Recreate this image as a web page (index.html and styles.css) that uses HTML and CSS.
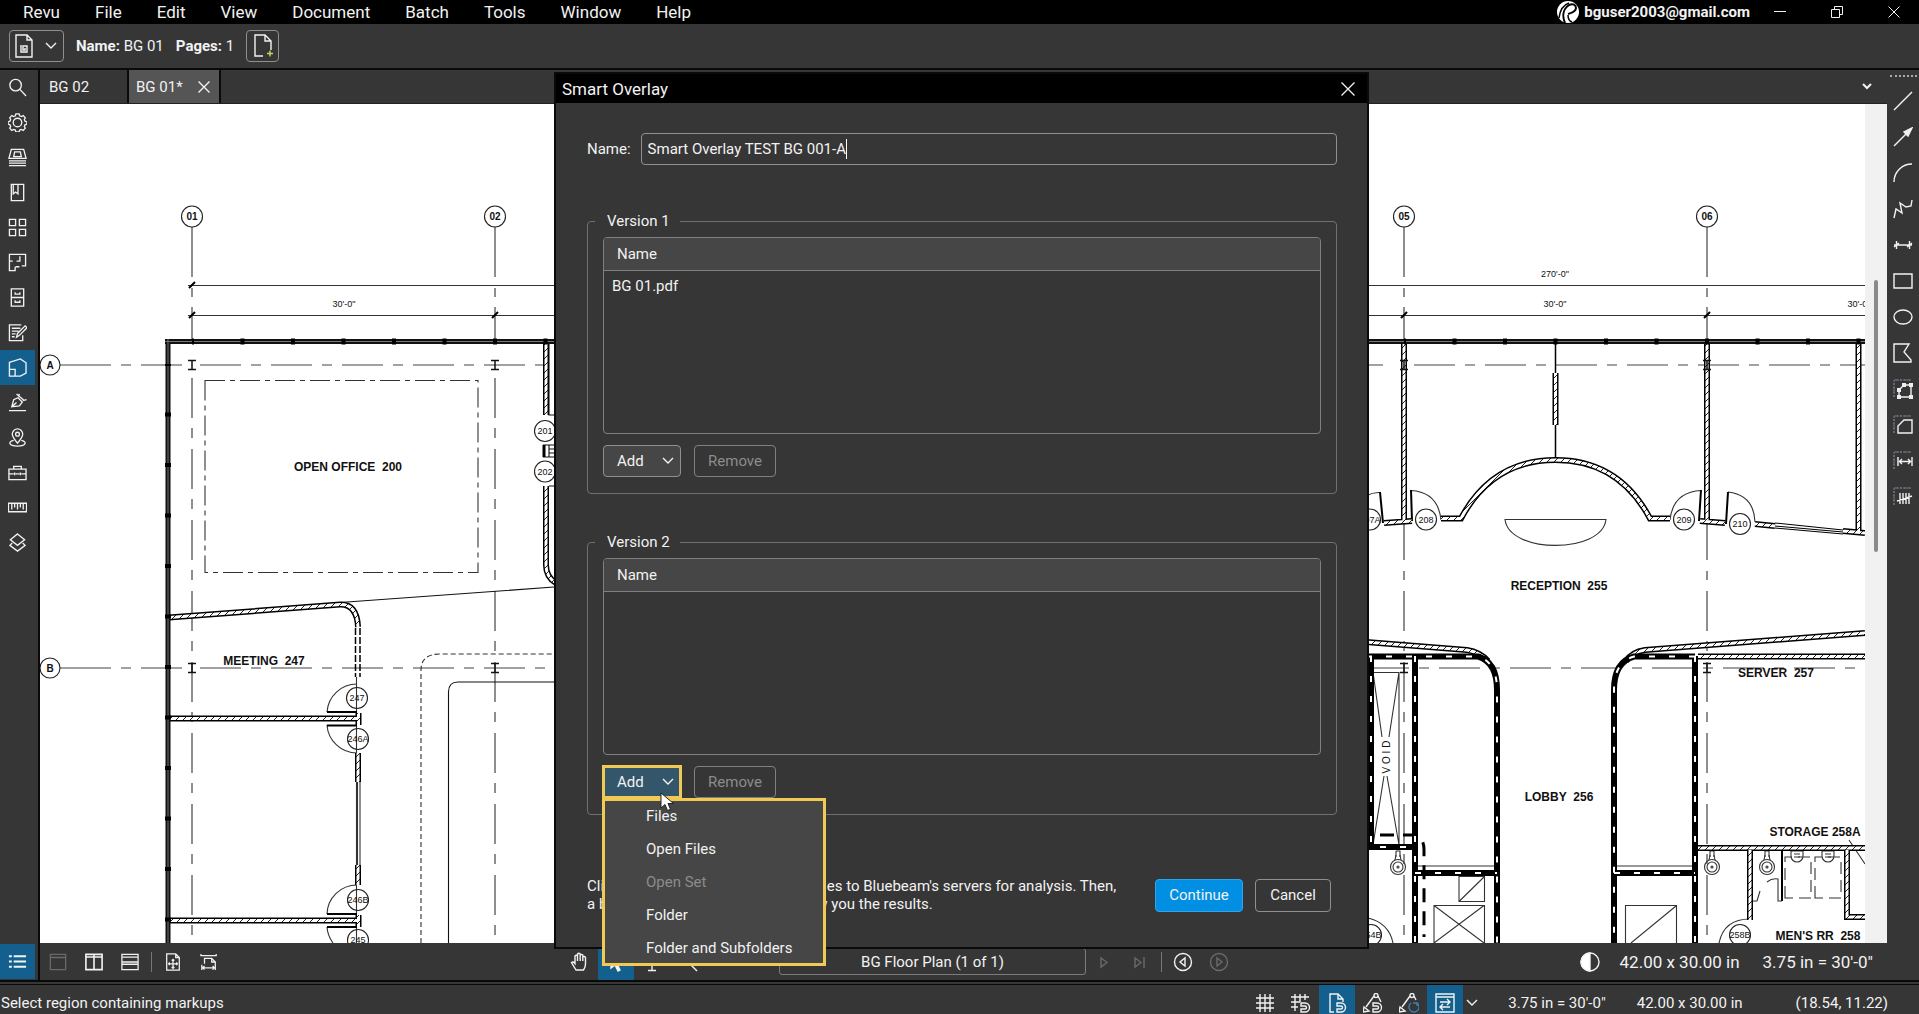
FILE: index.html
```html
<!DOCTYPE html>
<html lang="en">
<head>
<meta charset="utf-8">
<title>Revu - BG 01</title>
<link rel="stylesheet" href="styles.css">
</head>
<body>
<div class="app">
  <header class="menubar">
    <nav class="menus" aria-label="Main menu">
      <button>Revu</button><button>File</button><button>Edit</button><button>View</button><button>Document</button><button>Batch</button><button>Tools</button><button>Window</button><button>Help</button>
    </nav>
    <div class="account">
      <svg class="logo" viewBox="0 0 22 22"><circle cx="11" cy="11" r="11" fill="#fff"/><path d="M8 22C5 15 6 8 12 4c4-2 7 0 7 3 0 4-5 5-8 6" fill="none" stroke="#000" stroke-width="2"/><path d="M2 17C3 9 6 4 12 2" fill="none" stroke="#000" stroke-width="1.5"/><path d="M11 14c0 4 1 6 4 7" fill="none" stroke="#000" stroke-width="1.5"/></svg>
      <span>bguser2003@gmail.com</span>
    </div>
    <div class="window-controls">
      <button aria-label="Minimize"><svg viewBox="0 0 12 12"><path d="M0 5.5h12"/></svg></button>
      <button aria-label="Restore"><svg viewBox="0 0 12 12"><path d="M.5 3.500h8v8h-8zM3.500 3V.5h8v8H9"/></svg></button>
      <button aria-label="Close"><svg viewBox="0 0 12 12"><path d="M.5.5l11 11M11.500.5l-11 11"/></svg></button>
    </div>
  </header>

  <div class="toolbar">
    <button class="tool-btn doc-btn" aria-label="Document">
      <svg class="icon" viewBox="0 0 20 24"><path d="M2 1h11l5 5v17H2zM13 1v5h5M7 11v7h6v-6H9v4h2v-2"/></svg>
      <svg class="chev" viewBox="0 0 12 8"><path d="M1 1l5 5 5-5"/></svg>
    </button>
    <p><b>Name:</b> BG 01</p>
    <p><b>Pages:</b> 1</p>
    <button class="tool-btn" aria-label="Add page"><svg class="icon" viewBox="0 0 20 24"><path d="M10 22H2V1h10l6 6v9M12 1v6h6"/><path d="M17 16.500v6M14 19.500h6" stroke="#c8d85a"/></svg></button>
  </div>

  <main class="workspace">
    <aside class="panels">
      <button aria-label="Search"><svg class="icon" viewBox="0 0 20 20"><circle cx="8" cy="7.500" r="6"/><path d="M12.500 12l6.500 7"/></svg></button>
      <button aria-label="Settings"><svg class="icon" viewBox="0 0 20 20"><circle cx="10" cy="10" r="4.500"/><path d="M8.300 1h3.400l.6 2 1.700.7 2-1 2.200 2.300-1 1.900.7 1.700 2 .7v2.400l-2 .7-.7 1.700 1 1.900-2.200 2.300-2-1-1.700.7-.6 2H8.300l-.6-2-1.700-.7-2 1L1.800 16l1-1.900-.7-1.700-2-.7V9.300l2-.7.7-1.700-1-1.900L4 2.700l2 1L7.700 3z"/></svg></button>
      <button aria-label="File access"><svg class="icon" viewBox="0 0 20 20"><path d="M3.500 1.500h13l2.500 9.500H1zM7 4h6l1 5H6zM1 13.500h18M1 16h18M1 18.500h18"/></svg></button>
      <button aria-label="Bookmarks"><svg class="icon" viewBox="0 0 20 20"><path d="M3.500 1.500h13v17h-13zM5.500 1.500v10l2.500-2 2.500 2v-10"/></svg></button>
      <button aria-label="Thumbnails"><svg class="icon" viewBox="0 0 20 20"><path d="M1.500 1.500h6.500v6.500H1.500zM12 1.500h6.500v6.500H12zM1.500 12h6.500v6.500H1.500zM12 12h6.500v6.500H12z"/></svg></button>
      <button aria-label="Spaces"><svg class="icon" viewBox="0 0 20 20"><path d="M5 8.500H1.500v-7h17v12h-4M1.500 8.500v10h6v-4M9 8.500h3.500v-5M8 14.500h4"/></svg></button>
      <button aria-label="Sets"><svg class="icon" viewBox="0 0 20 20"><path d="M3.500 1h13v18h-13zM3.500 10h13M7.500 4.500v2h5v-2M7.500 13v2h5v-2"/></svg></button>
      <button aria-label="Forms"><svg class="icon" viewBox="0 0 20 20"><path d="M14 2H1.500v16.500h14V13M4 5.500h9M4 8.500h7M4 11.500h4M4 14.500h3M9 15l1-4 8-8 2 2-8 8z"/></svg></button>
      <button class="active" aria-label="Smart overlay"><svg class="icon" viewBox="0 0 20 20"><path d="M1.500 4.500L13 1l6 4v11l-6 3H1.500zM1.500 12h6v7"/></svg></button>
      <button aria-label="Signatures"><svg class="icon" viewBox="0 0 20 20"><path d="M1 18.500h18M4 14.500l2-7.500 4.500-2L15 9.500l-3 4zM4 14.500l5-4.500M9 1l8 7M11 4l1-3M15.500 8l4-1"/></svg></button>
      <button aria-label="Places"><svg class="icon" viewBox="0 0 20 20"><path d="M10 16C6 11 4.500 9 4.500 6.500a5.500 5.500 0 0 1 11 0C15.500 9 14 11 10 16z"/><circle cx="10" cy="6.500" r="2"/><path d="M6 13C0 14 0 19 10 19s10-5 4-6"/></svg></button>
      <button aria-label="Tool chest"><svg class="icon" viewBox="0 0 20 20"><path d="M1 6.500h18V17.500H1zM6 6.500v-3h8v3M1 11.500h5M8 11.500h4M14 11.500h5M7 10v3M13 10v3"/></svg></button>
      <button aria-label="Measurements"><svg class="icon" viewBox="0 0 20 20"><path d="M.5 5.500h19v9H.5zM4 6v6M7 6v4M10 6v6M13 6v4M16 6v6"/></svg></button>
      <button aria-label="Layers"><svg class="icon" viewBox="0 0 20 20"><path d="M10 1l7.500 6L10 13 2.500 7zM4.500 10.500L2 13l8 6 8-6-2.500-2.500"/></svg></button>
      <button class="active markups" aria-label="Markups list"><svg class="icon" viewBox="0 0 20 20"><path d="M6 4.500h13M6 10h13M6 15.500h13M1 4.500h3M1 10h3M1 15.500h3" stroke-width="2"/></svg></button>
    </aside>

    <section class="document">
      <div class="tabs">
        <button class="tab">BG 02</button>
        <div class="tab current"><button>BG 01*</button><button class="tab-close" aria-label="Close tab"><svg viewBox="0 0 12 12"><path d="M.5.5l11 11M11.500.5l-11 11"/></svg></button></div>
        <button class="tab-list" aria-label="All tabs"><svg class="chev" viewBox="0 0 12 8"><path d="M2 1l4 4 4-4" stroke-width="2"/></svg></button>
      </div>
      <div class="sheet">
        <svg class="plan" viewBox="40 104 1825 839" preserveAspectRatio="xMinYMin slice" role="img" aria-label="Floor plan">
          <defs>
            <pattern id="hatch" width="7" height="7" patternUnits="userSpaceOnUse"><rect width="7" height="7" fill="#fff"/><path d="M-1 8L8-1" stroke="#222" stroke-width="1"/></pattern>
            <path id="walls" d="M169 617.500L340 604.500Q357 604 358 627M169 718.500H359M358.500 713V725M358 753V782M358 865V885M169 920.500H359M358.500 915V927M546 343V415M546 486V565Q546 577 556 583M1404 343V520M1707 343V520M1858.500 343V533M1384 523L1412 521M1441 518.500H1461Q1492 460 1555.500 460T1650 518.500H1670M1700 521L1725 523M1755 524L1775 526M1843 531L1865 533M1555.500 373V425M1366 642L1467 650Q1480 652 1488 661M1865 633L1645 650Q1632 652 1626 661M1698 656.500H1865M1698 848H1865M1750 850V920M1847 850V917H1865"/>
            <path id="cores" d="M1366 656.500H1478Q1497 662 1497 690V943M1695 656.500H1634Q1614 662 1614 690V943M1371 656V847H1415M1415 656V943M1695 656V943M1415 873H1497M1614 873H1695"/>
            <path id="facade" d="M165 341.500H556M1366 341.500H1865M168 339V943"/>
            <path id="column" d="M-4-4.500H4M-4 4.500H4M0-4.500V4.500" stroke="#111" stroke-width="1.500"/>
            <g id="toilet"><path d="M-2-16h4v6M-2-16v6" /><circle r="7.500"/><circle r="5"/><circle r="1"/><path d="M-3-7L-2-12M3-7L2-12"/></g>
          </defs>
          <g class="grid">
            <path d="M192 307V340M192 378V935M495 307V340M495 378V935M1404 307V340M1404 520V560M1404 571V580M1707 307V340M1707 520V560M1707 571V580M1404 591V935M1707 591V935" stroke-dasharray="40 10 10 11"/>
            <path d="M192 227V277M192 288V297M495 227V277M495 288V297M1404 227V277M1404 288V297M1707 227V277M1707 288V297"/>
            <path d="M60 365H111M60 668H111"/>
            <path d="M121 365H131M141 365H182M121 668H131M141 668H182M200 365H554M200 668H554M1414 365H1865M1368 365H1383M1368 668H1865" stroke-dasharray="41 10 10 10"/>
          </g>
          <g class="thin">
            <path d="M188 285.500H554M188 315.500H554M1368 285.500H1865M1368 315.500H1865"/>
            <path d="M189 288l6-6M189 318l6-6M492 318l6-6M1401 318l6-6M1704 318l6-6" stroke="#000" stroke-width="2"/>
            <path d="M205 380.500H478V572.500H205Z" stroke-dasharray="20 5 5 5"/>
            <path d="M340 602.500L554 587M448.500 943V692Q448.500 682 458 682H554" stroke="#111"/>
            <path d="M421 943V670Q421 654 440 654H554" stroke-dasharray="5 3"/>
            <path d="M355.500 628V677M360 628V677" stroke="#000" stroke-width="1.500" stroke-dasharray="7 2"/>
            <path d="M356.500 677V943M360 782V865M357.500 782V865" />
            <path d="M327 712A30 30 0 0 1 357 684M327 725A30 30 0 0 0 357 753M327 914A30 30 0 0 1 357 885M327 927A30 30 0 0 0 333 943"/>
            <path d="M327 712H357M327 725.500H357M327 914H357M327 927H357" stroke="#000" stroke-width="2"/>
            <path d="M549 343V415H555M549 486H555M543 445H554M543 457H554M549 445V457M549 449H554M549 453H554" stroke="#111"/>
            <path d="M544 445V457" stroke="#000" stroke-width="3"/>
            <path d="M1555.500 343V373M1555.500 425V457" stroke="#000" stroke-width="1.500"/>
            <path d="M1505 519.500H1606C1602 554 1509 554 1505 519.500Z"/>
            <path d="M1411 490.500Q1438 492 1441 520M1701 490.500Q1673 492 1670 520M1728 492Q1754 495 1755 522M1380 492.500Q1373 492 1366 496"/>
            <path d="M1411 490L1412 521M1701 490L1699 521M1728 492L1726 524M1380 492L1383 523" stroke="#000" stroke-width="2"/>
            <path d="M1775 523L1843 530M1775 526L1843 532M1775 528L1843 534" stroke="#000"/>
            <path d="M1373 672.500H1399V845M1399 672L1389 737M1373 672L1382 737M1384 776L1373 845M1387 776L1399 845M1415 866H1497M1614 866H1695"/>
            <path d="M1459 876.500H1484.500V901.500H1459ZM1459 901.500L1484.500 876.500M1434 943V905.500H1484.500V943M1434 905.500L1484 943M1484 905.500L1434 943M1625.500 943V905.500H1676.500V943M1631 943L1676 906"/>
            <path d="M1380 835H1413Q1424 836 1424 850V937" stroke="#000" stroke-width="3" stroke-dasharray="14 9"/>
            <path d="M1782 850V901" stroke="#000" stroke-width="2"/>
            <path d="M1782 901H1778V879Q1772 878 1767 882M1760 891L1757 901H1753"/>
            <path d="M1785 898V857H1811V898ZM1815 898V857H1841V898Z" stroke-dasharray="12 6"/>
            <path d="M1791 851V856A6 6 0 0 0 1803 856V851ZM1822 851V856A6 6 0 0 0 1834 856V851ZM1794 854h6M1794 857h6M1825 854h6M1825 857h6M1849 840L1865 864M1719 943Q1724 919 1750 919M1368 918Q1389 923 1393 943"/>
            <use href="#toilet" x="1398" y="867"/><use href="#toilet" x="1712" y="867"/><use href="#toilet" x="1767" y="867"/>
          </g>
          <use href="#walls" class="wall-edge"/><use href="#walls" class="wall-fill"/>
          <use href="#cores" class="core"/><use href="#cores" class="core-mark"/>
          <use href="#facade" class="facade"/><use href="#facade" class="facade-line"/>
          <path d="M192 341.500H556M1404 341.500H1865" class="mullion"/>
          <path d="M168 364V943" class="mullion"/>
          <use href="#column" x="192" y="365"/><use href="#column" x="495" y="365"/><use href="#column" x="192" y="668"/><use href="#column" x="495" y="668"/><use href="#column" x="1404" y="365"/><use href="#column" x="1707" y="365"/><use href="#column" x="1404" y="668"/><use href="#column" x="1707" y="668"/>
          <g class="bubble">
            <circle cx="192" cy="216.500" r="10.500"/><circle cx="495" cy="216.500" r="10.500"/><circle cx="1404" cy="216.500" r="10.500"/><circle cx="1707" cy="216.500" r="10.500"/><circle cx="50" cy="365" r="10"/><circle cx="50" cy="668" r="10"/>
          </g>
          <g class="bubble clear">
            <circle cx="545" cy="431" r="10.500"/><circle cx="545" cy="471.500" r="10.500"/><circle cx="357" cy="698" r="10.500"/><circle cx="358" cy="739" r="10.500"/><circle cx="358" cy="900" r="10.500"/><circle cx="358" cy="940" r="10.500"/><circle cx="1370" cy="519.500" r="10.500"/><circle cx="1426" cy="519.500" r="10.500"/><circle cx="1684" cy="519.500" r="10.500"/><circle cx="1740" cy="524" r="10.500"/><circle cx="1740" cy="935" r="10.500"/><circle cx="1371" cy="935" r="10.500"/>
          </g>
          <g class="tag bold"><text x="192" y="220">01</text><text x="495" y="220">02</text><text x="1404" y="220">05</text><text x="1707" y="220">06</text><text x="50" y="369">A</text><text x="50" y="672">B</text></g>
          <g class="tag"><text x="545" y="434">201</text><text x="545" y="475">202</text><text x="357" y="701">247</text><text x="358" y="742">246A</text><text x="358" y="903">246B</text><text x="358" y="943">245</text><text x="1370" y="523">207A</text><text x="1426" y="523">208</text><text x="1684" y="523">209</text><text x="1740" y="527">210</text><text x="1740" y="938">258B</text><text x="1371" y="938">254B</text>
            <text x="344" y="307">30'-0"</text><text x="1555" y="277">270'-0"</text><text x="1555" y="307">30'-0"</text><text x="1859" y="307">30'-0"</text></g>
          <text class="void" transform="translate(1390 757) rotate(-90)">V O I D</text>
          <g class="room"><text x="348" y="471">OPEN OFFICE&#160; 200</text><text x="264" y="665">MEETING&#160; 247</text><text x="1559" y="590">RECEPTION&#160; 255</text><text x="1559" y="801">LOBBY&#160; 256</text><text x="1776" y="677">SERVER&#160; 257</text><text x="1815" y="836">STORAGE 258A</text><text x="1818" y="940">MEN'S RR&#160; 258</text></g>
        </svg>
        <div class="scrollbar"><div class="thumb"></div></div>
      </div>
      <div class="navbar">
        <div class="nav-left">
          <button class="dim" aria-label="Single view"><svg class="icon" viewBox="0 0 20 20"><path d="M1.500 1.500h17v17h-17zM1.500 5h17"/></svg></button>
          <button aria-label="Split vertically"><svg class="icon" viewBox="0 0 20 20"><path d="M1 1.500h18v17H1zM1 4.500h18M10 2v16" stroke-width="1.800"/></svg></button>
          <button aria-label="Split horizontally"><svg class="icon" viewBox="0 0 20 20"><path d="M1 1.500h18v17H1zM1 4.500h18M1 10h18M1 12.500h18"/></svg></button>
          <i class="rule"></i>
          <button aria-label="Fit page"><svg class="icon" viewBox="0 0 20 20"><path d="M3 1h10l4 4v14H3zM13 1v4h4M10 7v10M5 12h10M8.500 8.500L10 7l1.500 1.500M8.500 15.500L10 17l1.500-1.500M6.500 10.500L5 12l1.500 1.500M13.500 10.500L15 12l-1.500 1.500"/></svg></button>
          <button aria-label="Fit width"><svg class="icon" viewBox="0 0 20 20"><path d="M1 1v2h17V1M5 12V6h8l4 4v4M13 6v4h4M2 13v6M17 14v5M3 16.500h13M5 14.500l-2 2 2 2M14 14.500l2 2-2 2"/></svg></button>
        </div>
        <div class="nav-center">
          <button aria-label="Pan"><svg class="icon" viewBox="0 0 20 20"><path d="M6 18Q3 13 1.500 10.500q1.500-1.500 3.500 1V4q1.300-1.500 2.500 0V2q1.400-1.500 2.700 0v1q1.300-1.200 2.600 0v2q1.700-1 2.700.500V12q0 3-2 6zM7.500 4v5M10.200 3v6M12.800 4v5"/></svg></button>
          <button class="active" aria-label="Select"><svg class="icon" viewBox="0 0 20 20"><path d="M5 1v15l4-3 3 6 2-1-3-6h5z" fill="#fff"/></svg></button>
          <button aria-label="Select text"><svg class="icon" viewBox="0 0 20 20"><path d="M10 2v16M6 18.500h8M6 1.500h8"/></svg></button>
          <button aria-label="Zoom"><svg class="icon" viewBox="0 0 20 20"><circle cx="8" cy="7" r="6"/><path d="M12 12l7 7"/></svg></button>
          <input class="page-field" aria-label="Page" value="BG Floor Plan (1 of 1)">
          <button class="dim" aria-label="Next page"><svg class="icon" viewBox="0 0 20 20"><path d="M7 6l6 4.500L7 15z"/></svg></button>
          <button class="dim" aria-label="Last page"><svg class="icon" viewBox="0 0 20 20"><path d="M5 6l6 4.500L5 15zM14 5v11"/></svg></button>
          <i class="rule"></i>
          <button aria-label="Previous view"><svg class="icon" viewBox="0 0 20 20"><circle cx="10" cy="10" r="8.500"/><path d="M12 6v8l-5-4z"/></svg></button>
          <button class="dim" aria-label="Next view"><svg class="icon" viewBox="0 0 20 20"><circle cx="10" cy="10" r="8.500"/><path d="M8 6v8l5-4z"/></svg></button>
        </div>
        <div class="nav-right">
          <svg class="icon" viewBox="0 0 20 20"><circle cx="10" cy="10" r="9"/><path d="M10 1a9 9 0 0 0 0 18z" fill="#fff"/></svg>
          <span>42.00 x 30.00 in</span><span>3.75 in = 30'-0"</span>
        </div>
      </div>
    </section>

    <aside class="tools">
      <div class="grip"></div>
      <button aria-label="Line"><svg class="icon" viewBox="0 0 20 20"><path d="M1 19L19 1"/></svg></button>
      <button aria-label="Arrow"><svg class="icon" viewBox="0 0 20 20"><path d="M1 19L14 6"/><path d="M19 1l-8 4 4 4z" fill="#eee"/></svg></button>
      <button aria-label="Arc"><svg class="icon" viewBox="0 0 20 20"><path d="M1 19C1 9 9 1 19 1"/></svg></button>
      <button aria-label="Polyline"><svg class="icon" viewBox="0 0 20 20"><path d="M1 19l2-9 6 4-2-10 6 4 5-1 1-6"/></svg></button>
      <button aria-label="Dimension"><svg class="icon" viewBox="0 0 20 20"><path d="M1 10h18M3.500 6v8M16.500 6v8M1 12l5-4M14 12l5-4"/></svg></button>
      <button aria-label="Rectangle"><svg class="icon" viewBox="0 0 20 20"><path d="M1 3h18v14H1z"/></svg></button>
      <button aria-label="Ellipse"><svg class="icon" viewBox="0 0 20 20"><ellipse cx="10" cy="10" rx="9" ry="7"/></svg></button>
      <button aria-label="Polygon"><svg class="icon" viewBox="0 0 20 20"><path d="M1 1h15l-5 8 7 8v2H1z"/></svg></button>
      <button aria-label="Polylength"><svg class="icon" viewBox="0 0 20 20"><path class="ticks" d="M1 1h18M1 1v18M4 0v3M8 0v3M12 0v3M16 0v3M0 5h3M0 9h3M0 13h3M0 17h3"/><path d="M6 18V11l5-5h7v12z"/><path d="M4 9h4v4H4zM9 4h4v4H9zM16 4h4v4h-4zM4 16h4v4H4zM16 16h4v4h-4z" fill="#eee" stroke="none"/></svg></button>
      <button aria-label="Area"><svg class="icon" viewBox="0 0 20 20"><path class="ticks" d="M1 1h18M1 1v18M4 0v3M8 0v3M12 0v3M16 0v3M0 5h3M0 9h3M0 13h3M0 17h3"/><path d="M5 18v-7l6-6h8v13z"/></svg></button>
      <button aria-label="Length"><svg class="icon" viewBox="0 0 20 20"><path class="ticks" d="M1 1h18M1 1v18M4 0v3M8 0v3M12 0v3M16 0v3M0 5h3M0 9h3M0 13h3M0 17h3"/><path d="M5 6v9M19 6v9M6 10.500h12M9 8l-2.500 2.500L9 13M15 8l2.500 2.500L15 13"/></svg></button>
      <button aria-label="Count"><svg class="icon" viewBox="0 0 20 20"><path class="ticks" d="M1 1h18M1 1v18M4 0v3M8 0v3M12 0v3M16 0v3M0 5h3M0 9h3M0 13h3M0 17h3"/><path d="M7 6v11M10 6v11M13 6v11M16 6v11M4 14l15-5"/></svg></button>
    </aside>
  </main>

  <div class="divider"></div>
  <footer class="statusbar">
    <span class="hint">Select region containing markups</span>
    <div class="snaps">
      <button aria-label="Show grid"><svg class="icon" viewBox="0 0 20 20"><path d="M5 1v18M10 1v18M15 1v18M1 5h18M1 10h18M1 15h18"/></svg></button>
      <button aria-label="Snap to grid"><svg class="icon" viewBox="0 0 20 20"><path d="M4 1v17M9 1v8M14 1v6M0 4h18M0 9h9M0 14h7"/><path d="M10 10h4a4 4 0 0 1 0 9h-4v-3h4a1 1 0 0 0 0-3h-4z"/></svg></button>
      <button class="active" aria-label="Snap to content"><svg class="icon" viewBox="0 0 20 20"><path d="M7 19H3V1h8l5 5v3M11 1v5h5"/><path d="M10 10h4a4 4 0 0 1 0 9h-4v-3h4a1 1 0 0 0 0-3h-4z"/></svg></button>
      <button aria-label="Snap to markup"><svg class="icon" viewBox="0 0 20 20"><path d="M0 19l1-5 5 4zM3 14L11 3M15 3l3 6"/><circle cx="13" cy="2.500" r="2"/><path d="M10 10h4a4 4 0 0 1 0 9h-4v-3h4a1 1 0 0 0 0-3h-4z"/></svg></button>
      <button aria-label="Reuse"><svg class="icon" viewBox="0 0 20 20"><path d="M0 19l1-5 5 4zM3 14L11 3M15 3l2 4"/><circle cx="13" cy="2.500" r="2"/><path d="M18 10a5 5 0 1 1-6 0M18 9v4M18 10h-4" stroke="#3b7fae"/></svg></button>
      <button class="active" aria-label="Sync"><svg class="icon" viewBox="0 0 20 20"><path d="M1 1h18v18H1zM1 4h18M5 9h10M12 6l3 3-3 3M15 14H5M8 11l-3 3 3 3"/></svg></button>
      <button class="more" aria-label="Sync options"><svg class="chev" viewBox="0 0 12 8"><path d="M1 1l5 5 5-5"/></svg></button>
    </div>
    <span class="scale">3.75 in = 30'-0"</span><span class="size">42.00 x 30.00 in</span><span class="coords">(18.54, 11.22)</span>
  </footer>

  <div class="modal-layer">
    <form class="dialog" role="dialog" aria-labelledby="dialog-title">
      <div class="titlebar"><h1 id="dialog-title">Smart Overlay</h1><button type="button" aria-label="Close dialog"><svg viewBox="0 0 14 14"><path d="M.5.5l13 13M13.500.5l-13 13"/></svg></button></div>
      <div class="dialog-body">
        <div class="name-row"><label for="name">Name:</label><div class="field"><input id="name" value="Smart Overlay TEST BG 001-A"><i class="caret"></i></div></div>
        <fieldset>
          <legend>Version 1</legend>
          <div class="list"><table><thead><tr><th>Name</th></tr></thead><tbody><tr><td>BG 01.pdf</td></tr></tbody></table></div>
          <div class="actions">
            <button type="button" class="btn add">Add <svg class="chev" viewBox="0 0 12 8"><path d="M1 1l5 5 5-5"/></svg></button>
            <button type="button" class="btn remove" disabled>Remove</button>
          </div>
        </fieldset>
        <fieldset>
          <legend>Version 2</legend>
          <div class="list"><table><thead><tr><th>Name</th></tr></thead></table></div>
          <div class="actions">
            <div class="dropdown">
              <button type="button" class="btn add open" aria-expanded="true">Add <svg class="chev" viewBox="0 0 12 8"><path d="M1 1l5 5 5-5"/></svg></button>
              <div class="popup" role="menu">
                <button type="button" role="menuitem">Files</button>
                <button type="button" role="menuitem">Open Files</button>
                <button type="button" role="menuitem" disabled>Open Set</button>
                <button type="button" role="menuitem">Folder</button>
                <button type="button" role="menuitem">Folder and Subfolders</button>
              </div>
              <svg class="pointer" viewBox="0 0 14 20"><path d="M1 1v15l4-3.500 2.500 6 3-1.200L8 11.500h5.500z" fill="#fff" stroke="#222"/></svg>
            </div>
            <button type="button" class="btn remove" disabled>Remove</button>
          </div>
        </fieldset>
        <div class="dialog-footer">
          <p>Clicking Continue will upload your files to Bluebeam's servers for analysis. Then,<br>a browser window will open to show you the results.</p>
          <button class="btn primary">Continue</button>
          <button type="button" class="btn cancel">Cancel</button>
        </div>
      </div>
    </form>
  </div>
</div>
</body>
</html>
```

FILE: styles.css
```css
* { box-sizing: border-box; }

body {
  margin: 0;
  background: #363636;
  color: #f2f2f2;
  font: 15px/18px Roboto, sans-serif;
}

button, input {
  font: inherit;
  color: inherit;
  background: none;
  border: 0;
  padding: 0;
  margin: 0;
}

p, h1 { margin: 0; }

svg { display: block; fill: none; stroke: currentColor; }

.icon { width: 20px; height: 20px; stroke-width: 1.4; }
.chev { width: 12px; height: 8px; stroke-width: 1.4; }

.app {
  display: flex;
  flex-direction: column;
  height: 100vh;
  position: relative;
  overflow: hidden;
}

/* Menu bar */
.menubar {
  display: flex;
  align-items: center;
  height: 24px;
  background: #000;
  font-size: 17px;
}
.menus { display: flex; gap: 35px; padding-left: 23px; flex: 1; }
.account { display: flex; align-items: center; gap: 5px; font-size: 15px; font-weight: 700; }
.logo { width: 22px; height: 22px; stroke: none; }
.window-controls { display: flex; gap: 45px; padding: 0 19px 0 24px; }
.window-controls svg { width: 12px; height: 12px; }

/* Document toolbar */
.toolbar {
  display: flex;
  align-items: center;
  gap: 12px;
  height: 46px;
  padding-left: 9px;
  border-bottom: 2px solid #0a0a0a;
}
.tool-btn {
  display: flex;
  align-items: center;
  justify-content: center;
  width: 33px;
  height: 32px;
  border: 1px solid #909090;
  border-radius: 4px;
}
.tool-btn .icon { height: 24px; }
.doc-btn { width: 55px; justify-content: space-between; padding: 0 6px 0 4px; }
.toolbar b { font-weight: 700; }

/* Workspace */
.workspace { display: flex; flex: 1; min-height: 0; }

.panels {
  display: flex;
  flex-direction: column;
  width: 40px;
  border-right: 2px solid #0a0a0a;
}
.panels button {
  display: grid;
  place-items: center;
  width: 35px;
  height: 35px;
}
.panels .icon { width: 19px; height: 19px; }
.panels .markups { margin-top: auto; margin-bottom: 1px; }
.panels .active, .navbar .active, .snaps .active { background: #13608f; }

.document { display: flex; flex-direction: column; flex: 1; min-width: 0; }

.tabs { display: flex; height: 34px; border-bottom: 1px solid #222; }
.tab {
  display: flex;
  align-items: center;
  justify-content: space-between;
  width: 89px;
  padding: 0 9px;
  border-right: 2px solid #0a0a0a;
}
.tab.current { width: 92px; padding: 0 9px 0 7px; background: #555; }
.tab-close svg { width: 12px; height: 12px; stroke-width: 1.4; }
.tab-list { margin-left: auto; padding: 0 14px; }

.sheet { display: flex; flex: 1; min-height: 0; background: #fff; }
.plan { flex: 1; min-width: 0; height: 100%; stroke: none; }
.scrollbar { width: 22px; padding: 176px 9px 0; background: #f1f1f1; }
.thumb { height: 272px; border-radius: 2px; background: #8a8a8a; }

/* Floor plan drawing */
.grid path { stroke: #444; stroke-width: 1.2; }
.thin { stroke: #333; stroke-width: 1.1; }
.wall-edge { stroke: #000; stroke-width: 6; }
.wall-fill { stroke: url(#hatch); stroke-width: 3; }
.core { stroke: #000; stroke-width: 6; }
.core-mark { stroke: #fff; stroke-width: 2; stroke-dasharray: 6 14; }
.facade { stroke: #111; stroke-width: 5; }
.facade-line { stroke: #777; stroke-width: 1; }
.mullion { stroke: #000; stroke-width: 6; stroke-dasharray: 4 46.5; stroke-dashoffset: 2; }
.bubble { fill: #fff; stroke: #222; stroke-width: 1.1; }
.bubble.clear { fill: none; }
.tag, .room, .void {
  fill: #111;
  stroke: none;
  font-family: "Liberation Sans", sans-serif;
  text-anchor: middle;
}
.tag { font-size: 9px; }
.tag.bold { font-size: 10px; font-weight: 700; }
.void { font-size: 10px; }
.room { font-size: 12px; font-weight: 700; }

/* Page navigation */
.navbar { display: flex; align-items: center; height: 37px; }
.navbar button { display: grid; place-items: center; width: 36px; height: 36px; }
.navbar .dim { color: #6a6a6a; }
.nav-left { display: flex; align-items: center; }
.nav-left .icon { width: 18px; height: 18px; }
.rule { width: 1px; height: 20px; margin: 0 3px; background: #777; }
.nav-center {
  display: flex;
  align-items: center;
  margin-left: 335px;
}
.page-field {
  width: 307px;
  height: 27px;
  margin-left: 73px;
  border: 1px solid #7c7c7c;
  border-radius: 3px;
  text-align: center;
}
.nav-right {
  display: flex;
  align-items: center;
  gap: 23px;
  margin-left: auto;
  padding-right: 14px;
  font-size: 17px;
}
.nav-right .icon { margin-right: -3px; }

/* Markup tools */
.tools { display: flex; flex-direction: column; align-items: center; width: 32px; overflow: hidden; }
.grip { width: 27px; margin: 5px 0 6px; border-top: 2px dotted #aaa; }
.tools button { display: grid; place-items: center; width: 32px; height: 36px; }
.ticks { stroke: #77778c; stroke-width: 1; stroke-dasharray: 2 1; }

/* Status bar */
.divider { height: 5px; border-top: 2px solid #0a0a0a; border-bottom: 1px solid #0a0a0a; }
.statusbar { display: flex; align-items: center; height: 29px; padding: 6px 31px 0 1px; }
.hint { flex: 1; }
.snaps { display: flex; align-items: center; margin-top: -6px; }
.snaps button { display: grid; place-items: center; width: 36px; height: 29px; padding-top: 7px; }
.snaps .more { width: 18px; }
.scale { margin-left: 27px; }
.size { margin-left: 31px; }
.coords { margin-left: 53px; }

/* Dialog */
.modal-layer {
  position: absolute;
  top: 72px;
  left: 0;
  right: 0;
  display: flex;
  justify-content: center;
  padding-left: 4px;
}
.dialog { width: 815px; background: #363636; border: 2px solid #0a0a0a; }
.titlebar {
  display: flex;
  align-items: center;
  justify-content: space-between;
  height: 29px;
  padding: 0 12px 0 6px;
  background: #000;
}
.titlebar h1 { font-size: 17px; font-weight: 400; }
.titlebar svg { width: 14px; height: 14px; stroke-width: 1.3; }
.dialog-body { padding: 30px 30px 34px 31px; }

.name-row { display: flex; align-items: center; gap: 10px; margin-bottom: 47px; }
.field {
  display: flex;
  align-items: center;
  flex: 1;
  height: 32px;
  padding: 0 6px;
  border: 1px solid #909090;
  border-radius: 4px;
}
.field input { field-sizing: content; outline: 0; }
.caret { width: 1px; height: 20px; background: #fff; }

fieldset {
  margin: 0 0 39px;
  padding: 7px 15px 16px;
  border: 1px solid #707070;
  border-radius: 4px;
}
legend { margin-left: -8px; padding: 0 10px 0 12px; }

.list { height: 197px; border: 1px solid #808080; border-radius: 4px; overflow: hidden; }
.list table { width: 100%; border-collapse: collapse; }
.list th {
  height: 32px;
  padding: 0 13px;
  background: #464646;
  border-bottom: 1px solid #808080;
  font-weight: 400;
  text-align: left;
}
.list td { height: 32px; padding: 0 8px; }

.actions { display: flex; gap: 13px; margin-top: 11px; }
.btn { height: 32px; border: 1px solid #909090; border-radius: 4px; }
.add {
  display: flex;
  align-items: center;
  justify-content: space-between;
  width: 78px;
  padding: 0 6px 0 13px;
  background: #464646;
}
.remove { width: 82px; color: #8c8c8c; border-color: #808080; }

.dropdown { position: relative; }
.add.open {
  padding: 0 7px 0 14px;
  border: 0;
  border-radius: 0;
  outline: 3px solid #f0ca55;
  outline-offset: -2px;
  background: #34566b;
}
.popup {
  position: absolute;
  z-index: 2;
  top: 32px;
  left: -1px;
  display: flex;
  flex-direction: column;
  gap: 9px;
  width: 224px;
  padding: 3px 0;
  border: 3px solid #f0ca55;
  background: #464646;
}
.popup button { height: 24px; padding-left: 41px; text-align: left; }
.popup button:disabled { color: #8c8c8c; }
.pointer { position: absolute; z-index: 3; left: 57px; top: 26px; width: 14px; height: 20px; }

.dialog-footer { display: flex; align-items: center; gap: 12px; margin-top: 62px; padding-right: 6px; }
.dialog-footer p { flex: 1; white-space: nowrap; }
.primary { width: 88px; height: 33px; background: #008fe2; border-color: #30a5ec; }
.cancel { width: 76px; height: 33px; }
```
